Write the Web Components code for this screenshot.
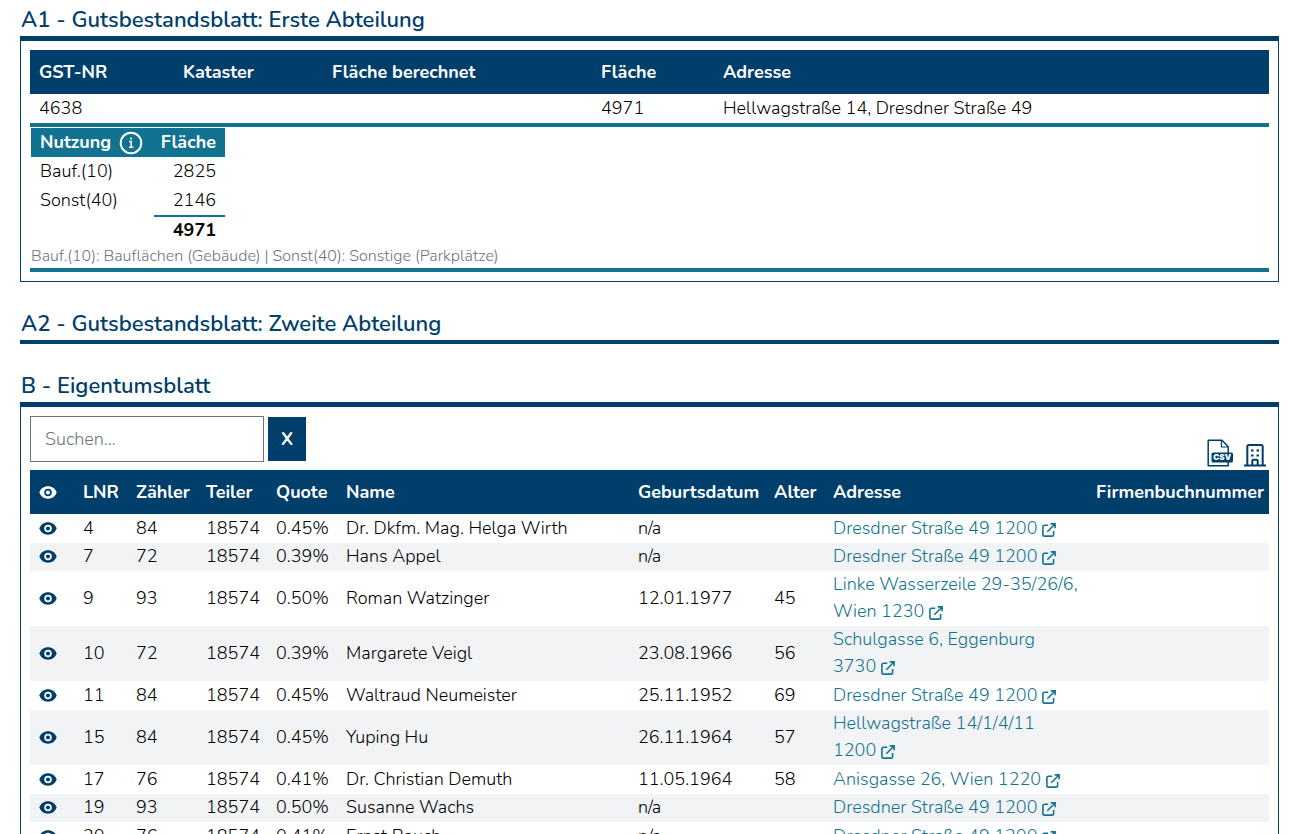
<!DOCTYPE html>
<html lang="de">
<head>
<meta charset="utf-8">
<meta name="viewport" content="width=device-width, initial-scale=1">
<title>Grundbuchauszug</title>
<style>
  html { --navy: #003e6b; --teal: #127391; --stripe: #f2f3f5; background: #fff; }
  body {
    margin: 0;
    padding: 0 12px 0 20px;
    color: #000;
    font: 300 18px/27px Nunito, "Open Sans", sans-serif;
  }
</style>
</head>
<body>
<register-page></register-page>

<script>
const ICONS = {
  eye: `<svg viewBox="0 0 18 13" width="18" height="13"><path fill="currentColor" d="M9 .3C4.900.3 1.500 2.800.400 6.500c1.100 3.700 4.500 6.200 8.600 6.200s7.500-2.500 8.600-6.200C16.500 2.800 13.100.3 9 .3z"/><circle cx="9" cy="6.500" r="2.900" fill="none" stroke="var(--ring)" stroke-width="1.700"/></svg>`,
  info: `<svg viewBox="0 0 24 24" width="24" height="24" fill="none" stroke="currentColor" stroke-width="2"><circle cx="12" cy="12" r="10.300"/><path stroke-width="1.500" d="M10.200 10.600h2v5.600M10 16.300h4.400"/><circle cx="12" cy="7.500" r="1.100" fill="currentColor" stroke="none"/></svg>`,
  link: `<svg viewBox="0 0 14 14" width="14" height="14" fill="none" stroke="currentColor" stroke-width="1.600"><path d="M6.200 2.300H2.600Q.9 2.300.9 4v7.400q0 1.700 1.700 1.700h7.300q1.700 0 1.700-1.700V8M8.700.9h4.400v4.400M13 1 5.300 8.700"/></svg>`,
  csv: `<svg viewBox="0 0 26 28" width="26" height="28"><path d="M1.200 26.700V1.300h13.800l6.200 6.400v19z" fill="none" stroke="currentColor" stroke-width="1.500" stroke-linejoin="round"/><path d="M14.400 1.800v6.200H21" fill="none" stroke="currentColor" stroke-width="1.200"/><rect x="4.500" y="13.500" width="21.500" height="10" rx="1.500" fill="currentColor"/><text x="15.200" y="21.300" text-anchor="middle" fill="#fff" font-family="Inter, sans-serif" font-size="8" font-weight="900">CSV</text></svg>`,
  building: `<svg viewBox="0 0 22 24" width="22" height="24" fill="none" stroke="currentColor" stroke-width="2"><path d="M0 22.500h22M3.300 22V3.600Q3.300 2 5 2h12q1.700 0 1.700 1.600V22M8.300 22v-4.300q0-1 1-1h3.400q1 0 1 1V22"/><path d="M7 7.500h2.500M12.500 7.500H15M7 12.500h2.500M12.500 12.500H15"/></svg>`
};

class UiIcon extends HTMLElement {
  connectedCallback() {
    if (!this.shadowRoot) this.attachShadow({ mode: "open" });
    this.shadowRoot.innerHTML = `<style>
      :host { display: inline-block; line-height: 0; --ring: #fff; }
      :host([inverse]) { --ring: var(--navy); }
      svg { display: block; }
    </style>${ICONS[this.getAttribute("name")]}`;
  }
}
customElements.define("ui-icon", UiIcon);

class RegisterSection extends HTMLElement {
  connectedCallback() {
    if (this.shadowRoot) return;
    this.attachShadow({ mode: "open" }).innerHTML = `<style>
      :host { display: block; }
      h2 {
        margin: 0; padding: 4px 1px 0; border-bottom: 4px solid var(--navy);
        color: var(--navy); font-size: 22px; line-height: 32px; font-weight: 600;
      }
      .body { border: 1px solid var(--navy); padding: 9px; }
      :host([empty]) .body { display: none; }
    </style>
    <h2>${this.getAttribute("heading")}</h2>
    <div class="body"><slot></slot></div>`;
  }
}
customElements.define("register-section", RegisterSection);

class UsageTable extends HTMLElement {
  connectedCallback() {
    if (this.shadowRoot) return;
    this.attachShadow({ mode: "open" }).innerHTML = `<style>
      :host { display: block; padding: 1px; }
      table { border-collapse: separate; border-spacing: 0; table-layout: fixed; width: 194px; }
      .use { width: 123px; }
      th, td { padding: 0 9px; height: 29px; text-align: left; box-sizing: border-box; }
      th { background: var(--teal); color: #fff; font-weight: 700; }
      th span { display: flex; align-items: center; gap: 8px; }
      th:last-child, td:last-child { text-align: right; }
      th:last-child { padding-left: 0; }
      tfoot td { font-weight: 700; }
      tfoot td:last-child { border-top: 2px solid var(--teal); }
      p { margin: 0; padding-top: 2px; font-size: 16px; line-height: 21px; color: #6c757d; }
    </style>
    <table>
      <colgroup><col class="use"><col></colgroup>
      <thead><tr><th><span>Nutzung <ui-icon name="info"></ui-icon></span></th><th>Fläche</th></tr></thead>
      <tbody><tr><td>Bauf.(10)</td><td>2825</td></tr><tr><td>Sonst(40)</td><td>2146</td></tr></tbody>
      <tfoot><tr><td></td><td>4971</td></tr></tfoot>
    </table>
    <p>Bauf.(10): Bauflächen (Gebäude) | Sonst(40): Sonstige (Parkplätze)</p>`;
  }
}
customElements.define("usage-table", UsageTable);

class ParcelTable extends HTMLElement {
  connectedCallback() {
    if (this.shadowRoot) return;
    this.attachShadow({ mode: "open" }).innerHTML = `<style>
      :host { display: block; }
      table { border-collapse: separate; border-spacing: 0; table-layout: fixed; width: 100%; }
      .nr { width: 144px; } .cadastre { width: 149px; } .calc { width: 269px; } .area { width: 122px; }
      th, td { padding: 0 9px; text-align: left; }
      th { height: 44px; background: var(--navy); color: #fff; font-weight: 700; }
      td { height: 29px; }
      tbody td { border-bottom: 4px solid var(--teal); }
      tbody tr.detail td { padding: 0; }
    </style>
    <table>
      <colgroup><col class="nr"><col class="cadastre"><col class="calc"><col class="area"><col></colgroup>
      <thead><tr><th>GST-NR</th><th>Kataster</th><th>Fläche berechnet</th><th>Fläche</th><th>Adresse</th></tr></thead>
      <tbody>
        <tr><td>4638</td><td></td><td></td><td>4971</td><td>Hellwagstraße 14, Dresdner Straße 49</td></tr>
        <tr class="detail"><td colspan="5"><usage-table></usage-table></td></tr>
      </tbody>
    </table>`;
  }
}
customElements.define("parcel-table", ParcelTable);

class OwnerToolbar extends HTMLElement {
  connectedCallback() {
    if (this.shadowRoot) return;
    this.attachShadow({ mode: "open" }).innerHTML = `<style>
      :host { display: flex; justify-content: space-between; align-items: flex-end; height: 54px; }
      form { display: flex; align-items: center; gap: 4px; align-self: flex-start; }
      input {
        box-sizing: border-box; width: 234px; height: 46px; padding: 0 14px;
        border: 1px solid #6c757d; border-radius: 0; background: #fff; font: inherit; color: #000;
      }
      input::placeholder { color: #6c757d; opacity: 1; }
      button { padding: 0; border: 0; font: inherit; color: var(--navy); background: none; }
      form button { width: 38px; height: 44px; background: var(--navy); color: #fff; font-weight: 700; }
      .tools { display: flex; align-items: flex-end; gap: 11px; padding: 0 3px 3px 0; }
      .tools button { display: block; line-height: 0; }
    </style>
    <form>
      <input type="text" placeholder="Suchen..." aria-label="Suchen">
      <button type="button">X</button>
    </form>
    <div class="tools">
      <button type="button" aria-label="CSV"><ui-icon name="csv"></ui-icon></button>
      <button type="button" aria-label="Firmen"><ui-icon name="building"></ui-icon></button>
    </div>`;
  }
}
customElements.define("owner-toolbar", OwnerToolbar);

const HOME = ["Dresdner Straße 49", "1200"];
const OWNERS = [
  [4, 84, "0.45%", "Dr. Dkfm. Mag. Helga Wirth", "n/a", "", HOME],
  [7, 72, "0.39%", "Hans Appel", "n/a", "", HOME],
  [9, 93, "0.50%", "Roman Watzinger", "12.01.1977", 45, ["Linke Wasserzeile 29-35/26/6, Wien", "1230"]],
  [10, 72, "0.39%", "Margarete Veigl", "23.08.1966", 56, ["Schulgasse 6, Eggenburg", "3730"]],
  [11, 84, "0.45%", "Waltraud Neumeister", "25.11.1952", 69, HOME],
  [15, 84, "0.45%", "Yuping Hu", "26.11.1964", 57, ["Hellwagstraße 14/1/4/11", "1200"]],
  [17, 76, "0.41%", "Dr. Christian Demuth", "11.05.1964", 58, ["Anisgasse 26, Wien", "1220"]],
  [19, 93, "0.50%", "Susanne Wachs", "n/a", "", HOME],
  [20, 76, "0.41%", "Ernst Rauch", "n/a", "", HOME]
];

class OwnerTable extends HTMLElement {
  connectedCallback() {
    if (this.shadowRoot) return;
    const rows = OWNERS.map(([nr, share, quote, name, born, age, [street, zip]]) => `<tr>
      <td><ui-icon name="eye"></ui-icon></td><td>${nr}</td><td>${share}</td><td>18574</td><td>${quote}</td>
      <td>${name}</td><td>${born}</td><td>${age}</td>
      <td><a href="#${nr}">${street} <span>${zip} <ui-icon name="link"></ui-icon></span></a></td><td></td></tr>`).join("");
    this.attachShadow({ mode: "open" }).innerHTML = `<style>
      :host { display: block; }
      table { border-collapse: separate; border-spacing: 0; table-layout: fixed; width: 100%; }
      .eye { width: 44px; } .lnr { width: 53px; } .share { width: 70px; } .quote { width: 70px; }
      .born { width: 136px; } .age { width: 59px; } .address { width: 263px; } .firm { width: 182px; }
      th, td { padding: 0 9px; text-align: left; vertical-align: middle; box-sizing: border-box; }
      th { height: 44px; background: var(--navy); color: #fff; font-weight: 700; white-space: nowrap; }
      td { height: 29px; padding-bottom: 1px; }
      tbody tr:nth-child(even) { background: var(--stripe); }
      tbody tr:nth-child(even) td { height: 28px; }
      td:first-child ui-icon, th ui-icon { display: block; }
      td:first-child { color: var(--navy); }
      td:nth-child(9) { padding-right: 0; }
      a { color: var(--teal); text-decoration: none; }
      a span { white-space: nowrap; }
      a ui-icon { vertical-align: -3px; }
    </style>
    <table>
      <colgroup><col class="eye"><col class="lnr"><col class="share"><col class="share"><col class="quote"><col><col class="born"><col class="age"><col class="address"><col class="firm"></colgroup>
      <thead><tr><th><ui-icon name="eye" inverse></ui-icon></th><th>LNR</th><th>Zähler</th><th>Teiler</th><th>Quote</th><th>Name</th><th>Geburtsdatum</th><th>Alter</th><th>Adresse</th><th>Firmenbuchnummer</th></tr></thead>
      <tbody>${rows}</tbody>
    </table>`;
  }
}
customElements.define("owner-table", OwnerTable);

class RegisterPage extends HTMLElement {
  connectedCallback() {
    if (this.shadowRoot) return;
    this.attachShadow({ mode: "open" }).innerHTML = `<style>
      :host { display: flex; flex-direction: column; gap: 22px; }
    </style>
    <register-section heading="A1 - Gutsbestandsblatt: Erste Abteilung"><parcel-table></parcel-table></register-section>
    <register-section heading="A2 - Gutsbestandsblatt: Zweite Abteilung" empty></register-section>
    <register-section heading="B - Eigentumsblatt"><owner-toolbar></owner-toolbar><owner-table></owner-table></register-section>`;
  }
}
customElements.define("register-page", RegisterPage);
</script>
</body>
</html>
